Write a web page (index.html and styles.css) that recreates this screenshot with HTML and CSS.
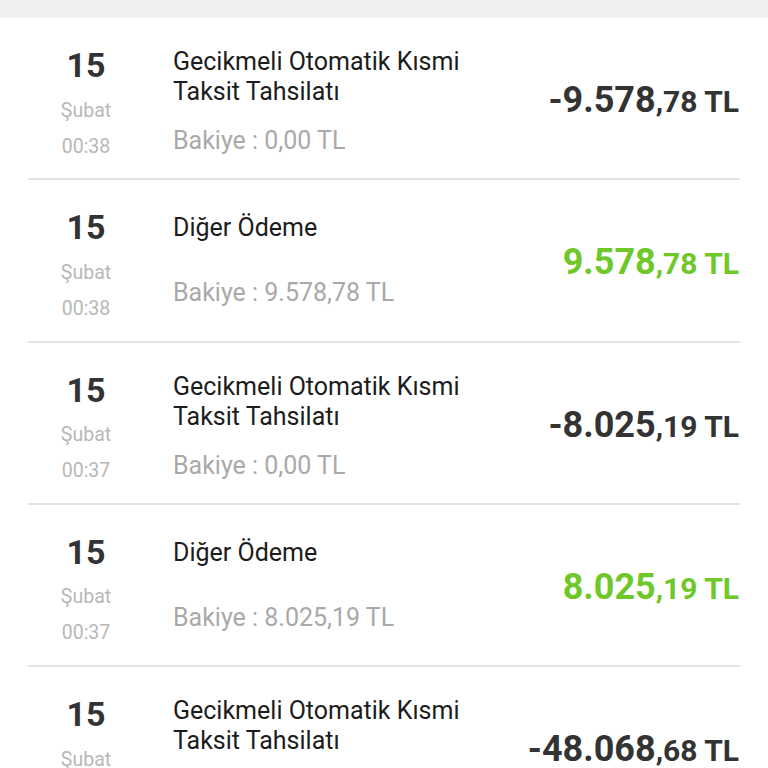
FILE: index.html
```html
<!DOCTYPE html>
<html lang="tr">
<head>
<meta charset="utf-8">
<title>Hesap Hareketleri</title>
<link rel="stylesheet" href="styles.css">
</head>
<body>
<div class="topbar"></div>
<ul class="list">
  <li class="item">
    <div class="date"><div class="day">15</div><div class="month">Şubat</div><div class="time">00:38</div></div>
    <div class="info"><div class="title">Gecikmeli Otomatik Kısmi Taksit Tahsilatı</div><div class="balance">Bakiye : 0,00 TL</div></div>
    <div class="amount neg"><span class="int">-9.578</span><span class="dec">,78 TL</span></div>
  </li>
  <li class="item short">
    <div class="date"><div class="day">15</div><div class="month">Şubat</div><div class="time">00:38</div></div>
    <div class="info"><div class="title">Diğer Ödeme</div><div class="balance">Bakiye : 9.578,78 TL</div></div>
    <div class="amount pos"><span class="int">9.578</span><span class="dec">,78 TL</span></div>
  </li>
  <li class="item">
    <div class="date"><div class="day">15</div><div class="month">Şubat</div><div class="time">00:37</div></div>
    <div class="info"><div class="title">Gecikmeli Otomatik Kısmi Taksit Tahsilatı</div><div class="balance">Bakiye : 0,00 TL</div></div>
    <div class="amount neg"><span class="int">-8.025</span><span class="dec">,19 TL</span></div>
  </li>
  <li class="item short">
    <div class="date"><div class="day">15</div><div class="month">Şubat</div><div class="time">00:37</div></div>
    <div class="info"><div class="title">Diğer Ödeme</div><div class="balance">Bakiye : 8.025,19 TL</div></div>
    <div class="amount pos"><span class="int">8.025</span><span class="dec">,19 TL</span></div>
  </li>
  <li class="item">
    <div class="date"><div class="day">15</div><div class="month">Şubat</div><div class="time">00:37</div></div>
    <div class="info"><div class="title">Gecikmeli Otomatik Kısmi Taksit Tahsilatı</div><div class="balance">Bakiye : 0,00 TL</div></div>
    <div class="amount neg"><span class="int">-48.068</span><span class="dec">,68 TL</span></div>
  </li>
</ul>
</body>
</html>
```

FILE: styles.css
```css
html, body {
  margin: 0;
  padding: 0;
  background: #ffffff;
  height: 768px;
  overflow: hidden;
  font-family: Roboto, "Noto Sans", sans-serif;
}

.topbar {
  height: 18px;
  background: #f1f0ee;
}

.list {
  list-style: none;
  margin: 0 28px;
  padding: 0;
}

.item {
  display: flex;
  align-items: flex-start;
  height: 160.3px;
  border-bottom: 2px solid #e2e2e2;
}

.date {
  width: 116px;
  flex: none;
  text-align: center;
  margin-top: 27px;
}

.day {
  font-size: 34px;
  font-weight: 700;
  line-height: 40px;
  color: #333333;
}

.month {
  font-size: 19.5px;
  line-height: 36px;
  margin-top: 7.5px;
  color: #b8b8b8;
}

.time {
  font-size: 19.5px;
  line-height: 35px;
  color: #b8b8b8;
}

.info {
  width: 320px;
  flex: none;
  margin-left: 29px;
  margin-top: 29px;
}

.short .info {
  margin-top: 33px;
}

.title {
  font-size: 25px;
  line-height: 30px;
  color: #1c1c1c;
}

.balance {
  font-size: 25px;
  line-height: 30px;
  margin-top: 19px;
  color: #a9a9a9;
}

.short .balance {
  margin-top: 35px;
}

.amount {
  flex: 1;
  text-align: right;
  margin-top: 62px;
  line-height: 40px;
  font-weight: 700;
  white-space: nowrap;
  margin-right: 1px;
}

.amount .int {
  font-size: 36px;
}

.amount .dec {
  font-size: 30px;
}

.neg {
  color: #333333;
}

.pos {
  color: #6fc82a;
}
```
